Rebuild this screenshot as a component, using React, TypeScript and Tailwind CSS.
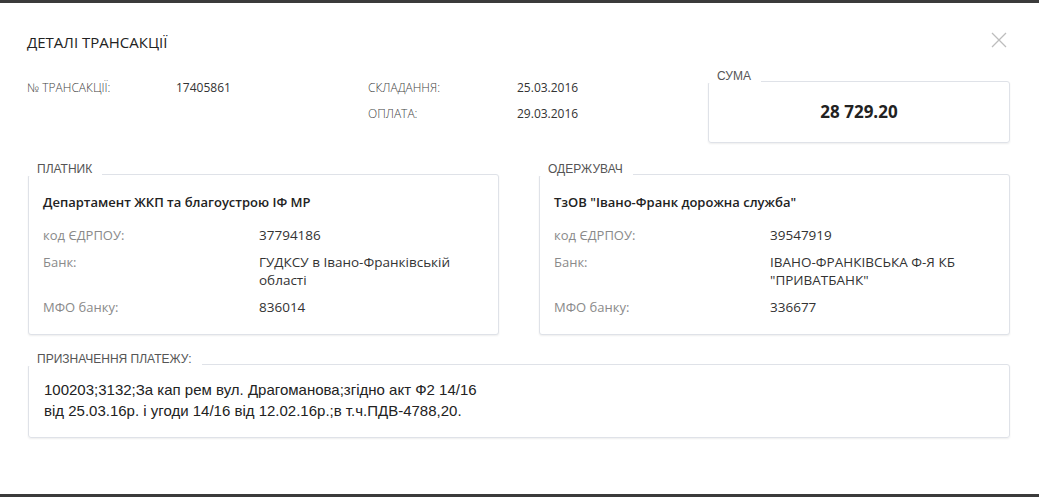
const sans = "font-['Open_Sans','Noto_Sans',sans-serif]";
const arial = "font-['Liberation_Sans',Arial,sans-serif]";

function Legend({ children }: { children: React.ReactNode }) {
  return (
    <span
      className={`absolute -top-[13px] -left-px bg-white pl-[9px] pr-[10px] text-[12px] leading-[14px] text-[#555] ${arial}`}
    >
      {children}
    </span>
  );
}

function Party({
  title,
  name,
  code,
  bank,
  mfo,
}: {
  title: string;
  name: string;
  code: string;
  bank: string[];
  mfo: string;
}) {
  const rows: [string, React.ReactNode][] = [
    ["код ЄДРПОУ:", code],
    [
      "Банк:",
      bank.map((l) => (
        <span key={l} className="block">
          {l}
        </span>
      )),
    ],
    ["МФО банку:", mfo],
  ];
  return (
    <div className="relative h-[161px] flex-1 rounded-[3px] border border-[#dfe2e8] bg-white px-[14px] pt-[18px] shadow-[0_1px_2px_rgba(0,0,0,0.07)]">
      <Legend>{title}</Legend>
      <div className="text-[13px] font-semibold leading-[18px] text-[#222]">{name}</div>
      <div className="mt-[15px] flex flex-col gap-[9px] text-[13px] leading-[18px]">
        {rows.map(([k, v]) => (
          <div key={k} className="flex">
            <div className="w-[216px] shrink-0 text-[#8a8a8a]">{k}</div>
            <div className="text-[13.5px] text-[#333]">{v}</div>
          </div>
        ))}
      </div>
    </div>
  );
}

export default function App() {
  return (
    <div className={`h-[497px] w-[1039px] overflow-hidden bg-[#3b3b3b] pt-[3px] ${sans}`}>
      <div className="h-[491px] bg-white pl-[28px] pr-[29px] pt-[29px]">
        {/* Header */}
        <div className="-ml-px flex items-start justify-between">
          <h2 className="text-[15px] leading-[20px] text-[#222]">ДЕТАЛІ ТРАНСАКЦІЇ</h2>
          <button className="mr-[3px] text-[#bdbdbd]" aria-label="close">
            <svg width="16" height="16" viewBox="0 0 16 16">
              <path d="M1 1 L15 15 M15 1 L1 15" stroke="currentColor" strokeWidth="1.3" fill="none" />
            </svg>
          </button>
        </div>

        {/* Info */}
        <div className="-ml-px mt-[27px] flex items-start text-[12px] leading-[18px]">
          <div className="w-[149px] font-light text-[#444]">№ ТРАНСАКЦІЇ:</div>
          <div className="w-[192px] text-[#333]">17405861</div>
          <div className="flex w-[149px] flex-col gap-[8px] font-light text-[#444]">
            <span>СКЛАДАННЯ:</span>
            <span>ОПЛАТА:</span>
          </div>
          <div className="flex flex-1 flex-col gap-[8px] text-[#333]">
            <span>25.03.2016</span>
            <span>29.03.2016</span>
          </div>
          <div className="relative mt-[2px] flex h-[62px] w-[302px] items-center justify-center rounded-[3px] border border-[#dfe2e8] shadow-[0_1px_2px_rgba(0,0,0,0.07)]">
            <Legend>СУМА</Legend>
            <span className="text-[17px] font-bold text-[#222]">28 729.20</span>
          </div>
        </div>

        {/* Parties */}
        <div className="mt-[31px] flex gap-[40px]">
          <Party
            title="ПЛАТНИК"
            name="Департамент ЖКП та благоустрою ІФ МР"
            code="37794186"
            bank={["ГУДКСУ в Івано-Франківській", "області"]}
            mfo="836014"
          />
          <Party
            title="ОДЕРЖУВАЧ"
            name={'ТзОВ "Івано-Франк дорожна служба"'}
            code="39547919"
            bank={["ІВАНО-ФРАНКІВСЬКА Ф-Я КБ", '"ПРИВАТБАНК"']}
            mfo="336677"
          />
        </div>

        {/* Purpose */}
        <div className="relative mt-[29px] h-[74px] rounded-[3px] border border-[#dfe2e8] px-[15px] pt-[14px] shadow-[0_1px_2px_rgba(0,0,0,0.07)]">
          <Legend>ПРИЗНАЧЕННЯ ПЛАТЕЖУ:</Legend>
          <p className={`text-[15px] leading-[21px] text-[#222] ${arial}`}>
            <span className="block">100203;3132;За кап рем вул. Драгоманова;згідно акт Ф2 14/16</span>
            <span className="block">від 25.03.16р. і угоди 14/16 від 12.02.16р.;в т.ч.ПДВ-4788,20.</span>
          </p>
        </div>
      </div>
    </div>
  );
}
